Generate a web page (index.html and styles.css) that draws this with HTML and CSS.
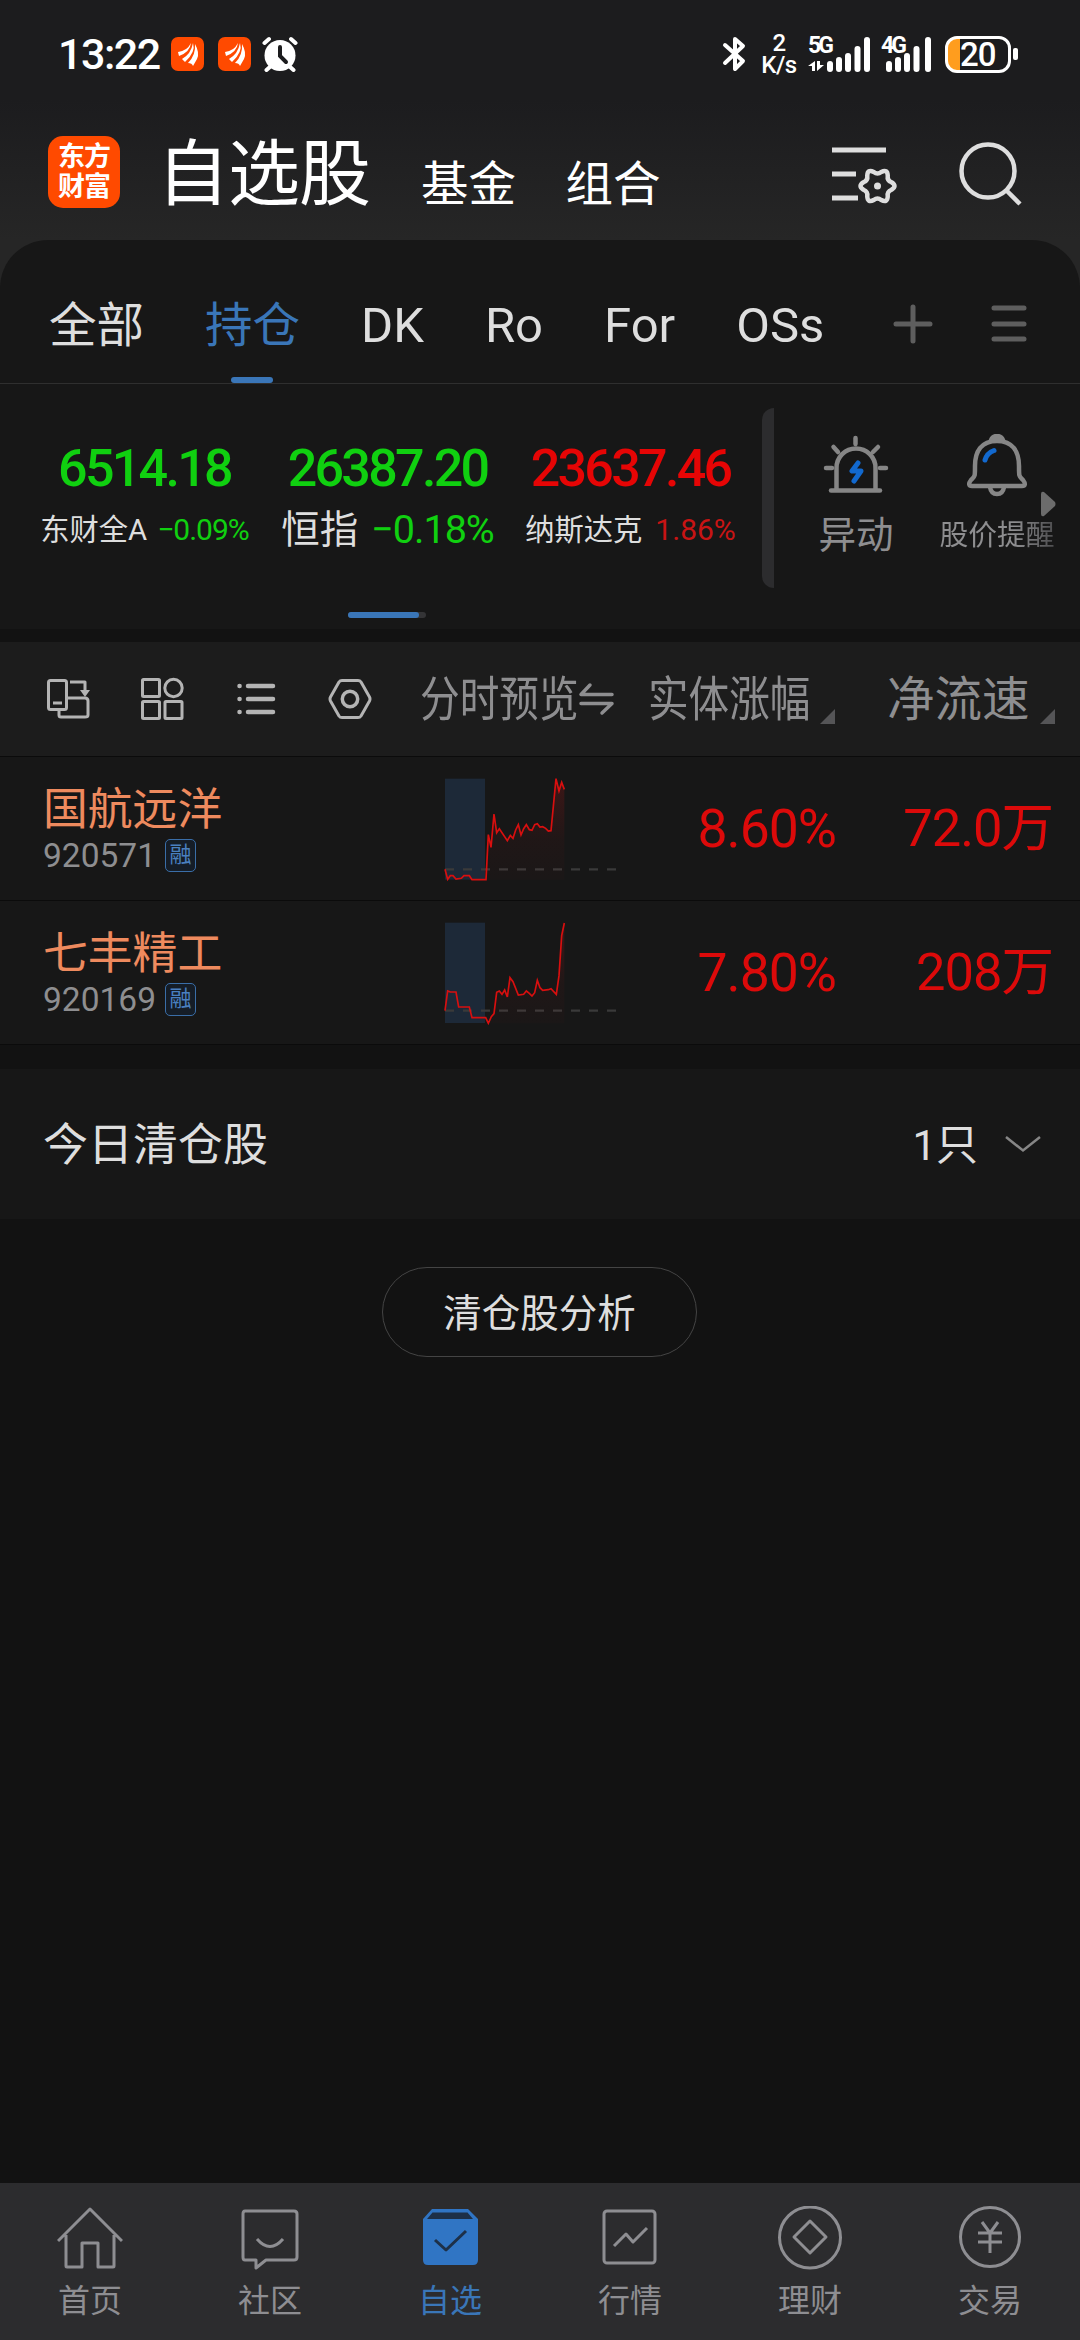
FILE: index.html
```
<!DOCTYPE html>
<html lang="zh-CN">

<head>
    <meta charset="UTF-8">
    <meta name="viewport" content="width=device-width, initial-scale=1.0">
    <title>自选股</title>
    <link rel="stylesheet" href="styles.css">
</head>

<body>

    <div class="top">
        <!-- 状态栏 -->
        <div class="status-bar">
            <span class="time">13:22</span>
            <svg class="app-icon" width="33" height="34" viewBox="0 0 33 34">
                <rect width="33" height="34" rx="7" fill="#ff4a00"/>
                <path d="M7 15Q16 14 20 6Q19 15 8 19ZM11 22Q20 17 22 6Q25 15 14 25ZM17 26Q25 18 24 7Q29 16 26 22L22 29Q21 26 17 26Z" fill="#fff"/>
            </svg>
            <svg class="app-icon" width="33" height="34" viewBox="0 0 33 34">
                <rect width="33" height="34" rx="7" fill="#ff4a00"/>
                <path d="M7 15Q16 14 20 6Q19 15 8 19ZM11 22Q20 17 22 6Q25 15 14 25ZM17 26Q25 18 24 7Q29 16 26 22L22 29Q21 26 17 26Z" fill="#fff"/>
            </svg>
            <svg class="alarm" width="36" height="36" viewBox="0 0 36 36" stroke-linecap="round">
                <circle cx="18" cy="19.500" r="15.500" fill="#fff"/>
                <path d="M2.500 7L7 3M29 3L33.500 7M9 30L4.500 34M27 30L31.500 34" stroke="#fff" stroke-width="4"/>
                <path d="M18 11V20L24 26" stroke="#1c1c1e" stroke-width="4" fill="none"/>
            </svg>
            <div class="status-right">
                <svg class="bluetooth" width="24" height="36" viewBox="0 0 24 36" fill="none" stroke="#fff" stroke-width="4" stroke-linejoin="round" stroke-linecap="round">
                    <path d="M3 9L21 25L13 33V3L21 10L3 27"/>
                </svg>
                <div class="speed"><span>2</span><span>K/s</span></div>
                <div class="signal">
                    <span class="net">5G</span>
                    <svg width="54" height="35" viewBox="0 0 54 35" fill="#fff">
                        <path d="M7 24V34H4V29H0ZM9 24V34L16 28H12V24Z"/>
                        <rect x="19" y="24" width="6" height="11" rx="3"/>
                        <rect x="28" y="20" width="6" height="15" rx="3"/>
                        <rect x="37" y="16" width="6" height="19" rx="3"/>
                        <rect x="46.500" y="9" width="6" height="26" rx="3"/>
                    </svg>
                    <i class="full"></i>
                </div>
                <div class="signal signal-4g">
                    <span class="net">4G</span>
                    <svg width="42" height="35" viewBox="2 0 42 35" fill="#fff">
                        <rect x="7" y="24" width="6" height="11" rx="3"/>
                        <rect x="16" y="20" width="6" height="15" rx="3"/>
                        <rect x="25" y="16" width="6" height="19" rx="3"/>
                        <rect x="34.500" y="9" width="6" height="26" rx="3"/>
                    </svg>
                    <i class="full"></i>
                </div>
                <div class="battery"><span>20</span></div>
                <i class="battery-tip"></i>
            </div>
        </div>

        <!-- 顶部导航 -->
        <div class="header">
            <div class="logo"><span>东方</span><span>财富</span></div>
            <div class="titles">
                <h1>自选股</h1>
                <span>基金</span>
                <span>组合</span>
            </div>
            <svg class="manage" width="66" height="64" viewBox="0 0 66 64" fill="none" stroke="#dedede" stroke-width="5">
                <path d="M1 8H55M1 32H25M1 56H27"/>
                <path d="M60.500 40.250Q66.500 44 60.500 47.750Q56 49.500 56.750 54.250Q56.500 61.300 50.250 58Q46.500 55 42.750 58Q36.500 61.300 36.250 54.250Q37 49.500 32.500 47.750Q26.500 44 32.500 40.250Q37 38.500 36.250 33.750Q36.500 26.700 42.750 30Q46.500 33 50.250 30Q56.500 26.700 56.750 33.750Q56 38.500 60.500 40.250Z" stroke-width="4.500" stroke-linejoin="round"/>
                <circle cx="46.500" cy="44" r="3.500" fill="#dedede" stroke="none"/>
            </svg>
            <svg class="search" width="64" height="66" viewBox="0 0 64 66" fill="none" stroke="#dedede" stroke-width="4.500">
                <circle cx="30" cy="31" r="26.500"/>
                <path d="M48 50L62 64"/>
            </svg>
        </div>
    </div>

    <div class="panel">
        <!-- 分组 -->
        <div class="tabs">
            <span>全部</span>
            <span class="active">持仓</span>
            <span class="latin">DK</span>
            <span class="latin">Ro</span>
            <span class="latin">For</span>
            <span class="latin">OSs</span>
            <svg class="plus" width="40" height="40" viewBox="0 0 40 40" stroke="#5e5e5e" stroke-width="5" stroke-linecap="round">
                <path d="M20 3V37M3 20H37"/>
            </svg>
            <svg class="menu" width="36" height="40" viewBox="0 0 36 40" stroke="#5e5e5e" stroke-width="5" stroke-linecap="round">
                <path d="M3 4H33M3 20H33M3 35H33"/>
            </svg>
        </div>

        <!-- 指数 -->
        <div class="market">
            <div class="indices">
                <div class="index down">
                    <strong>6514.18</strong>
                    <p class="small"><span>东财全A</span><em>−0.09%</em></p>
                </div>
                <div class="index down">
                    <strong>26387.20</strong>
                    <p><span>恒指</span><em>−0.18%</em></p>
                </div>
                <div class="index up">
                    <strong>23637.46</strong>
                    <p class="small"><span>纳斯达克</span><em>1.86%</em></p>
                </div>
                <div class="pager"><i></i></div>
            </div>
            <div class="split"></div>
            <div class="tool">
                <svg width="66" height="60" viewBox="0 0 66 60" fill="none" stroke="#868686" stroke-width="4.500" stroke-linecap="round">
                    <path d="M8 56.500H57" />
                    <path d="M13.500 55V34A19.500 19.500 0 0 1 52.500 34V55" stroke-linecap="butt"/>
                    <path d="M32.500 4V10M10.500 13L15 18M55 13L50 18M3 34H9M57 34H63"/>
                    <path d="M35 29L29 37H38L31 47" stroke="#1269cf" stroke-width="5" stroke-linejoin="round"/>
                </svg>
                <span>异动</span>
            </div>
            <div class="tool alert">
                <svg width="62" height="64" viewBox="0 0 62 64" fill="none" stroke="#868686" stroke-width="4.500" stroke-linejoin="round">
                    <path d="M25 6A6.500 6.500 0 0 1 37 6Z" fill="#868686"/>
                    <path d="M31 7C15 7 9 18 9 32C9 43 9 42 5 46C2 50 3 52 6 52H56C59 52 60 50 57 46C53 42 53 43 53 32C53 18 47 7 31 7Z"/>
                    <path d="M24 53Q25 60 31 60Q37 60 38 53"/>
                    <path d="M19 26Q21 19 28 16.500" stroke="#1269cf" stroke-width="5" stroke-linecap="round"/>
                </svg>
                <span>股价提醒</span>
                <svg class="more" width="16" height="26" viewBox="0 0 16 26"><path d="M1 3Q1 0 4 1L15 11Q16 13 15 15L4 25Q1 26 1 23Z" fill="#6c6c6c"/></svg>
            </div>
        </div>
    </div>

    <!-- 表头 -->
    <div class="columns">
        <div class="view-icons">
            <svg width="44" height="44" viewBox="0 0 44 44" fill="none" stroke="#b4b4b4" stroke-width="3" stroke-linejoin="round">
                <rect x="2.500" y="3.500" width="18" height="29" rx="2"/>
                <path d="M7 26H16M13 33V38Q13 40 15 40H39Q42 40 42 38V24Q42 21 39 21H21M24 5H39V14"/>
                <path d="M34 13H44L39 20Z" fill="#b4b4b4" stroke="none"/>
            </svg>
            <svg width="44" height="44" viewBox="0 0 44 44" fill="none" stroke="#b4b4b4" stroke-width="3">
                <rect x="2.500" y="2.500" width="17" height="17" rx="1"/>
                <circle cx="33.500" cy="11" r="8.700"/>
                <rect x="2.500" y="24.500" width="17" height="17" rx="1"/>
                <rect x="25" y="24.500" width="17" height="17" rx="1"/>
            </svg>
            <svg width="44" height="44" viewBox="0 0 44 44" stroke="#b4b4b4" stroke-width="4.500" stroke-linecap="round">
                <path d="M5.500 9H5.600M5.500 22H5.600M5.500 35H5.600M14 9H39M14 22H39M14 35H39"/>
            </svg>
            <svg width="44" height="44" viewBox="0 0 44 44" fill="none" stroke="#b4b4b4" stroke-width="3" stroke-linejoin="round">
                <path d="M14 3.500H30Q32 3.500 33 5L41.500 20Q42.500 22 41.500 24L33 39Q32 40.500 30 40.500H14Q12 40.500 11 39L2.500 24Q1.500 22 2.500 20L11 5Q12 3.500 14 3.500Z"/>
                <circle cx="22" cy="22" r="7.700" stroke-width="3.500"/>
            </svg>
        </div>
        <div class="col col-chart">
            <span class="narrow">分时预览</span>
            <svg width="36" height="34" viewBox="0 0 36 34" fill="none" stroke="#8e8e90" stroke-width="3.500" stroke-linecap="round" stroke-linejoin="round">
                <path d="M12 3L3 12.500H34M3 21.500H34L24 31"/>
            </svg>
        </div>
        <div class="col col-change"><span class="narrow">实体涨幅</span><i class="sort"></i></div>
        <div class="col col-flow"><span>净流速</span><i class="sort"></i></div>
    </div>

    <!-- 持仓列表 -->
    <div class="stock">
        <div class="stock-name">
            <h2>国航远洋</h2>
            <p>920571<span class="badge">融</span></p>
        </div>
        <svg class="chart" width="190" height="135" viewBox="0 0 570 405">
            <defs>
                <linearGradient id="fade" x1="0" y1="0" x2="0" y2="1">
                    <stop offset="0" stop-color="#c81414" stop-opacity=".22"/>
                    <stop offset=".6" stop-color="#c81414" stop-opacity=".05"/>
                    <stop offset="1" stop-color="#c81414" stop-opacity=".02"/>
                </linearGradient>
            </defs>
            <rect x="30" y="41" width="120" height="303" fill="#1d2938"/>
            <path d="M30 313H545" class="base"/>
            <path d="M153 344L160 209 168 247 177 147 185 203 193 191 217 227 226 211 234 220 242 195 250 179 258 210 266 191 274 179 283 194 291 196 299 179 307 176 315 186 323 185 332 190 340 198 348 197 363 41 372 78 380 52 388 73V344Z" fill="url(#fade)"/>
            <polyline class="line" points="30,313 38,343 46,332 54,332 63,342 79,340 87,332 103,332 111,344 153,344 160,209 168,247 177,147 185,203 193,191 217,227 226,211 234,220 242,195 250,179 258,210 266,191 274,179 283,194 291,196 299,179 307,176 315,186 323,185 332,190 340,198 348,197 363,41 372,78 380,52 388,73"/>
        </svg>
        <div class="num change">8.60%</div>
        <div class="num flow">72.0万</div>
    </div>
    <div class="stock">
        <div class="stock-name">
            <h2>七丰精工</h2>
            <p>920169<span class="badge">融</span></p>
        </div>
        <svg class="chart" width="190" height="135" viewBox="0 432 570 405">
            <rect x="30" y="473" width="120" height="301" fill="#1d2938"/>
            <path d="M30 737H545" class="base"/>
            <path d="M152 758L160 775 169 755 177 746 185 682 193 678 201 688 209 675 217 696 225 638 234 650 250 690 266 688 274 678 283 685 291 693 299 683 307 646 315 668 323 676 340 674 348 671 364 688 372 632 380 512 388 474V775H160Z" fill="url(#fade)"/>
            <polyline class="line" points="30,737 38,678 46,681 63,681 71,726 103,726 111,758 152,758 160,775 169,755 177,746 185,682 193,678 201,688 209,675 217,696 225,638 234,650 250,690 266,688 274,678 283,685 291,693 299,683 307,646 315,668 323,676 340,674 348,671 364,688 372,632 380,512 388,474"/>
        </svg>
        <div class="num change">7.80%</div>
        <div class="num flow">208万</div>
    </div>

    <div class="cleared">
        <span>今日清仓股</span>
        <span class="count">1只</span>
        <svg width="36" height="18" viewBox="0 0 36 18" fill="none" stroke="#868686" stroke-width="2.500"><path d="M1 2L18 15.500L35 2"/></svg>
    </div>

    <button class="analyze" type="button">清仓股分析</button>

    <!-- 底部导航 -->
    <div class="nav">
        <div class="nav-item">
            <svg width="66" height="66" viewBox="0 0 66 66"><path d="M1 35L33 3L65 35M9 29V60Q9 61 10 61H25V37H41V61H56Q57 61 57 60V29"/></svg>
            <span>首页</span>
        </div>
        <div class="nav-item">
            <svg width="66" height="66" viewBox="0 0 66 66"><path d="M8 5H57Q60 5 60 8V51Q60 54 57 54H29L19 62V54H8Q6 54 6 51V8Q6 5 8 5ZM20 33Q33 48 46 33"/></svg>
            <span>社区</span>
        </div>
        <div class="nav-item active">
            <svg width="66" height="66" viewBox="0 0 66 66">
                <path d="M6 13L15 3H51L61 13V54Q61 59 56 59H11Q6 59 6 54Z" fill="#3075c4" stroke="none"/>
                <path d="M15.500 6.500H50.500L56 13H10Z" fill="#1d3048" stroke="none"/>
                <path d="M18 34L29 44L49 25" stroke="#1d3048"/>
            </svg>
            <span>自选</span>
        </div>
        <div class="nav-item">
            <svg width="66" height="66" viewBox="0 0 66 66"><rect x="7" y="5" width="51" height="52" rx="3"/><path d="M17 40L29 28L36 36L50 22"/></svg>
            <span>行情</span>
        </div>
        <div class="nav-item">
            <svg width="66" height="66" viewBox="0 0 66 66"><circle cx="33" cy="31.500" r="30.500"/><path d="M33 15L49 31L33 47L17 31Z"/></svg>
            <span>理财</span>
        </div>
        <div class="nav-item">
            <svg width="66" height="66" viewBox="0 0 66 66"><circle cx="33" cy="31" r="29.500"/><path d="M25 16L33 27L41 16M21 27H45M21 36H45M33 27V47"/></svg>
            <span>交易</span>
        </div>
    </div>

</body>

</html>
```
FILE: styles.css
```
* {
    box-sizing: border-box;
}
body {
    margin: 0;
    width: 1080px;
    height: 2340px;
    display: flex;
    flex-direction: column;
    background: #121212;
    color: #dedede;
    font-family: Roboto, "Noto Sans CJK SC", sans-serif;
    overflow: hidden;
}
h1, h2, p {
    margin: 0;
    font-weight: 400;
}
em, i {
    font-style: normal;
}
svg {
    display: block;
    flex: none;
}
.top {
    height: 290px;
    margin-bottom: -50px;
    background: linear-gradient(#1c1c1e 100px, #262626 240px);
}

/* 状态栏 */
.status-bar {
    height: 108px;
    padding-left: 58px;
    padding-right: 62px;
    display: flex;
    align-items: center;
    color: #fff;
}
.time {
    width: 113px;
    font-size: 43px;
    font-weight: 500;
    letter-spacing: -1.500px;
    line-height: 50px;
}
.app-icon {
    margin-right: 14px;
}
.alarm {
    margin-left: -3px;
}
.status-right {
    margin-left: auto;
    display: flex;
    align-items: center;
}
.bluetooth {
    margin-right: 15px;
}
.speed {
    width: 36px;
    margin-right: 11px;
    display: flex;
    flex-direction: column;
    align-items: center;
    font-size: 24px;
    font-weight: 500;
    line-height: 22px;
    letter-spacing: -0.500px;
}
.signal {
    position: relative;
    display: flex;
    height: 35px;
    margin-right: 11px;
}
.signal-4g {
    margin-right: 14px;
}
.net {
    position: absolute;
    left: 0;
    top: -3px;
    font-size: 23px;
    font-weight: 700;
    line-height: 23px;
    letter-spacing: -3px;
}
.full {
    width: 6px;
    height: 35px;
    margin-left: 2px;
    border-radius: 3px;
    background: #fff;
}
.battery {
    width: 66px;
    height: 37px;
    border: 3px solid #fff;
    border-radius: 12px;
    background: linear-gradient(90deg, #ff9d1e 12px, transparent 12px);
    font-size: 33px;
    font-weight: 500;
    line-height: 31px;
    letter-spacing: -1px;
    padding-left: 12px;
}
.battery-tip {
    width: 5px;
    height: 12px;
    margin-left: 2px;
    border-radius: 2px;
    background: #fff;
}

/* 顶部导航 */
.header {
    height: 132px;
    padding: 0 58px 0 48px;
    display: flex;
    align-items: center;
    color: #fff;
}
.logo {
    width: 72px;
    height: 72px;
    margin-top: -4px;
    padding-top: 6px;
    border-radius: 15px;
    background: #ff4a00;
    display: flex;
    flex-direction: column;
    align-items: center;
    font-size: 27px;
    font-weight: 700;
    line-height: 30px;
    letter-spacing: -1px;
}
.titles {
    display: flex;
    align-items: baseline;
    margin-left: 37px;
    margin-top: 1px;
    flex: 1;
}
.titles h1 {
    width: 264px;
    font-size: 72px;
    line-height: 100px;
    letter-spacing: -1px;
}
.titles span {
    width: 144.500px;
    font-size: 47.500px;
    position: relative;
    top: 2px;
}
.manage {
    margin-top: 0;
    margin-right: 61px;
}
.search {
    margin-top: -3px;
}

/* 分组标签 */
.panel {
    height: 389px;
    flex: none;
    background: #171717;
    border-radius: 48px 48px 0 0;
}
.tabs {
    height: 144px;
    padding-left: 49px;
    padding-top: 24px;
    padding-right: 53px;
    display: flex;
    align-items: center;
    gap: 61px;
    font-size: 47.500px;
    border-bottom: 1px solid #2f2f2f;
}
.tabs span {
    margin-top: -4px;
}
.tabs .latin {
    margin-top: 3px;
    font-size: 49px;
}
.tabs .active {
    color: #3a76b8;
    position: relative;
}
.tabs .active::after {
    content: "";
    position: absolute;
    left: 26px;
    bottom: -27px;
    width: 42px;
    height: 6px;
    border-radius: 3px;
    background: #3a76b8;
}
.plus {
    margin-left: auto;
}
.menu {
    margin-left: -3px;
}

/* 指数 */
.market {
    height: 245px;
    display: flex;
}
.indices {
    width: 762px;
    padding: 55px 10px 0 23px;
    display: grid;
    grid-template-columns: repeat(3, 243px);
    align-content: start;
    text-align: center;
}
.index strong {
    display: block;
    font-size: 52px;
    font-weight: 500;
    line-height: 60px;
    letter-spacing: -2.700px;
}
.index p {
    height: 60px;
    line-height: 62px;
    font-size: 38.500px;
    white-space: nowrap;
}
.index em {
    margin-left: 13px;
    font-size: 39.500px;
    letter-spacing: -1px;
}
.index .small {
    font-size: 29.300px;
}
.index .small em {
    margin-left: 10px;
    font-size: 30px;
    letter-spacing: -1px;
}
.index.up .small em {
    margin-left: 13px;
    letter-spacing: 0;
}
.down strong, .down em {
    color: #10d010;
}
.up strong {
    color: #e60505;
}
.up em {
    color: #c81414;
}
.pager {
    grid-column: 1 / 4;
    width: 78px;
    height: 6px;
    margin: 53px 0 0 325px;
    border-radius: 3px;
    background: #343436;
}
.pager i {
    display: block;
    width: 71px;
    height: 6px;
    border-radius: 3px;
    background: #3a76b8;
}
.split {
    width: 12px;
    height: 180px;
    margin-top: 24px;
    border-radius: 12px 0 0 12px;
    background: #2c2c2e;
}
.tool {
    position: relative;
    width: 164px;
    padding-top: 50px;
    display: flex;
    flex-direction: column;
    align-items: center;
    color: #8e8e90;
    font-size: 37.500px;
}
.tool span {
    height: 60px;
    line-height: 60px;
    margin-top: 11px;
}
.alert {
    width: 118px;
    font-size: 28.800px;
}
.alert span {
    margin-top: 7px;
    white-space: nowrap;
    background: linear-gradient(90deg, #8e8e90 65%, #4c4c4e);
    -webkit-background-clip: text;
    color: transparent;
}
.more {
    position: absolute;
    right: 0;
    top: 107px;
}

/* 表头 */
.columns {
    height: 115px;
    flex: none;
    margin-top: 13px;
    padding-left: 46px;
    display: flex;
    align-items: center;
    background: #1c1c1c;
    border-bottom: 1px solid #0b0b0b;
    color: #8e8e90;
    font-size: 47.500px;
}
.view-icons {
    display: flex;
    gap: 50px;
    width: 374px;
}
.col {
    display: flex;
    align-items: center;
    height: 114px;
    white-space: nowrap;
}
.col span {
    margin-top: -8px;
}
.narrow {
    width: 158px;
    transform: scaleX(.835);
    transform-origin: left;
}
.col-chart {
    width: 228px;
}
.col-change {
    width: 239px;
}
.col-change .narrow {
    width: 160px;
    transform: scaleX(.855);
}
.sort {
    align-self: flex-end;
    margin: 0 0 32px 12px;
    border-left: 15px solid transparent;
    border-bottom: 15px solid #555557;
}
.col-flow .sort {
    margin-left: 10px;
}

/* 持仓列表 */
.stock {
    height: 144px;
    flex: none;
    padding-left: 43px;
    display: flex;
    background: #171717;
    border-bottom: 1px solid #0b0b0b;
}
.stock-name {
    width: 392px;
    padding-top: 23px;
}
.stock h2 {
    color: #ee8a5e;
    font-size: 44.800px;
    line-height: 60px;
}
.stock p {
    display: flex;
    align-items: center;
    height: 34px;
    margin-top: -2px;
    font-size: 33.500px;
    color: #8e8e90;
}
.badge {
    width: 31px;
    height: 33px;
    margin-left: 9px;
    border: 1px solid #3a6ea8;
    border-radius: 5px;
    background: #151d27;
    color: #4a80c0;
    font-size: 22px;
    line-height: 29px;
    text-align: center;
}
.chart {
    margin-top: 8px;
}
.base {
    stroke: #3a3a3a;
    stroke-width: 7;
    stroke-dasharray: 27 27;
}
.line {
    fill: none;
    stroke: #d80f0f;
    stroke-width: 5;
}
.num {
    color: #dc0a0a;
    font-size: 53.500px;
    line-height: 143px;
    letter-spacing: -1px;
    text-align: right;
}
.change {
    width: 211px;
}
.flow {
    width: 217px;
    font-size: 52.500px;
}

.cleared {
    height: 150px;
    flex: none;
    margin-top: 24px;
    padding: 0 39px 0 43px;
    display: flex;
    align-items: center;
    background: #171717;
    font-size: 45px;
}
.cleared span {
    margin-top: -5px;
}
.cleared .count {
    margin-left: auto;
    margin-right: 27px;
    font-size: 42px;
}
.analyze {
    width: 315px;
    height: 90px;
    flex: none;
    margin: 48px 0 0 382px;
    padding: 0 0 5px;
    border: 1px solid #444;
    border-radius: 45px;
    background: none;
    color: #dedede;
    font-family: inherit;
    font-size: 38.500px;
}

/* 底部导航 */
.nav {
    height: 157px;
    margin-top: auto;
    flex: none;
    display: flex;
    background: #2c2c2e;
}
.nav-item {
    width: 180px;
    padding-top: 23px;
    display: flex;
    flex-direction: column;
    align-items: center;
    color: #8e8e92;
    font-size: 32px;
}
.nav-item svg {
    fill: none;
    stroke: #8e8e92;
    stroke-width: 3;
    stroke-linejoin: round;
}
.nav-item span {
    line-height: 40px;
    margin-top: 9px;
}
.nav .active {
    color: #3a76b8;
}
```
